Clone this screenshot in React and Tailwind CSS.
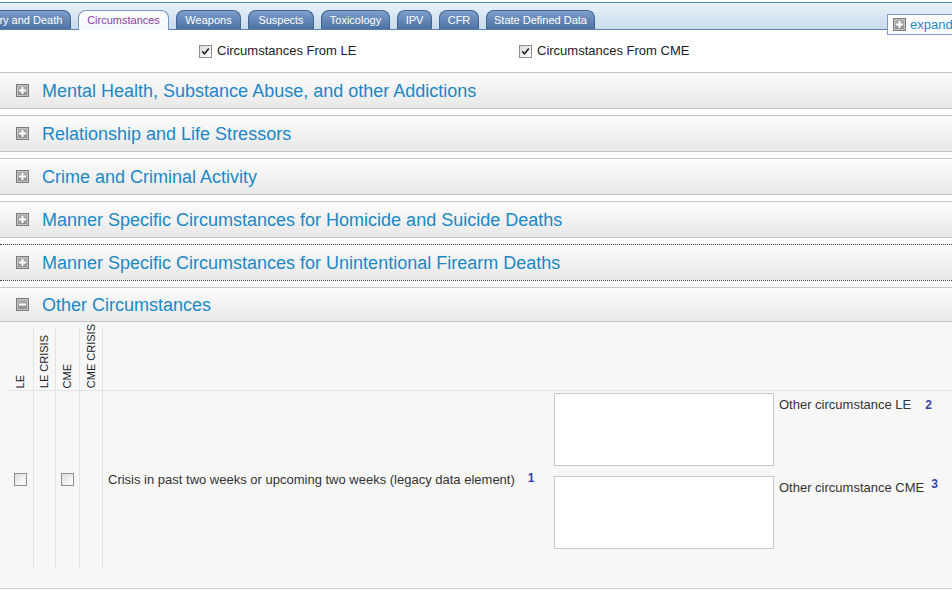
import React from "react";

const tabs = [
  { label: "Injury and Death", w: "w-[98px] ml-[-27px]" },
  { label: "Circumstances", w: "w-[91px]", active: true },
  { label: "Weapons", w: "w-[65px]" },
  { label: "Suspects", w: "w-[66px]" },
  { label: "Toxicology", w: "w-[69px]" },
  { label: "IPV", w: "w-[35px]" },
  { label: "CFR", w: "w-[40px]" },
  { label: "State Defined Data", w: "w-[109px]" },
];

const sections = [
  { title: "Mental Health, Substance Abuse, and other Addictions", cls: "mt-0 border-solid" },
  { title: "Relationship and Life Stressors", cls: "mt-[6px] border-solid" },
  { title: "Crime and Criminal Activity", cls: "mt-[6px] border-solid" },
  { title: "Manner Specific Circumstances for Homicide and Suicide Deaths", cls: "mt-[6px] border-solid" },
  { title: "Manner Specific Circumstances for Unintentional Firearm Deaths", cls: "mt-[6px] border-dotted !border-[#444]" },
];

const CheckBox = ({ checked }) => (
  <span className="inline-flex w-[13px] h-[13px] shrink-0 items-center justify-center border border-[#8f8f8f] bg-linear-to-br from-[#dedede] to-white">
    {checked && (
      <svg width="9" height="9" viewBox="0 0 9 9">
        <path d="M1.2 4.3 L3.5 6.8 L7.8 1.6" fill="none" stroke="#1f1f1f" strokeWidth="1.5" />
      </svg>
    )}
  </span>
);

const Toggle = ({ open }) => (
  <span className="inline-flex w-[13px] h-[13px] shrink-0 items-center justify-center border border-[#7a7a7a] bg-linear-to-b from-[#b0b0b0] to-[#8e8e8e] shadow-[inset_0_0_0_1px_#c4c4c4]">
    <svg width="9" height="9" viewBox="0 0 9 9">
      <path d={open ? "M1 4.5H8" : "M1 4.5H8M4.5 1V8"} stroke="#fff" strokeWidth="2" />
    </svg>
  </span>
);

const SectionHeader = ({ title, open, cls }) => (
  <div className={`flex items-center pl-[16px] border-y border-[#c6c6c6] bg-linear-to-b from-[#fcfcfc] to-[#e8e8e8] ${cls}`}>
    <Toggle open={open} />
    <span className="ml-[13px] text-[18px] leading-none text-[#1b88c6]">{title}</span>
  </div>
);

const Num = ({ n, cls }) => (
  <span className={`text-[12px] font-bold text-[#3541b0] ${cls}`}>{n}</span>
);

export default function App() {
  return (
    <div className="relative w-[952px] h-[605px] overflow-hidden bg-white font-['Liberation_Sans',Arial,sans-serif] text-[#333]">
      {/* Tab strip */}
      <div className="h-[30px] pt-[2px]">
        <div className="h-full flex items-end gap-[7px] border-y border-[#5a82ad] bg-linear-to-b from-[#e9f1f8] to-[#c8dbec]">
          {tabs.map((t) => (
            <div
              key={t.label}
              className={
                t.active
                  ? `${t.w} shrink-0 h-[20px] -mb-px flex items-center justify-center whitespace-nowrap rounded-t-[8px] border border-b-0 border-[#7397be] bg-linear-to-b from-white to-[#f3f8fc] text-[11px] text-[#8c3f99]`
                  : `${t.w} shrink-0 h-[19px] flex items-center justify-center whitespace-nowrap rounded-t-[8px] border border-b-0 border-[#3d6592] bg-linear-to-b from-[#809fca] to-[#4b71a4] text-[11px] text-white`
              }
            >
              {t.label}
            </div>
          ))}
        </div>
      </div>

      {/* Expand all */}
      <div className="absolute left-[887px] top-[14px] w-[90px] h-[21px] flex items-center pl-[5px] border border-[#7b9cc3] bg-white">
        <Toggle />
        <span className="ml-[4px] text-[13px] text-[#1b88c6]">expand</span>
      </div>

      {/* Source checkboxes */}
      <div className="h-[42px] flex items-center pl-[199px] text-[13px] text-[#222]">
        <div className="w-[320px] flex items-center">
          <CheckBox checked />
          <span className="ml-[5px]">Circumstances From LE</span>
        </div>
        <div className="flex items-center">
          <CheckBox checked />
          <span className="ml-[5px]">Circumstances From CME</span>
        </div>
      </div>

      {/* Collapsed sections */}
      {sections.map((s) => (
        <SectionHeader key={s.title} title={s.title} cls={`h-[37px] ${s.cls}`} />
      ))}
      <SectionHeader title="Other Circumstances" open cls="h-[35px] mt-[6px]" />

      {/* Other circumstances table */}
      <div className="pt-[6px] pb-[20px] bg-[#f7f7f7] border-b border-[#cfcfcf]">
        <div className="ml-[8px] flex h-[63px] border-b border-[#e3e3e3] text-[11px] text-[#222]">
          {[
            { l: "LE", w: "w-[25px]" },
            { l: "LE CRISIS", w: "w-[22px] border-l" },
            { l: "CME", w: "w-[24px] border-l" },
            { l: "CME CRISIS", w: "w-[23px] border-l" },
          ].map((c) => (
            <div key={c.l} className={`${c.w} border-[#e3e3e3] flex items-end justify-center pb-[2px]`}>
              <span className="[writing-mode:vertical-rl] rotate-180 leading-none whitespace-nowrap">{c.l}</span>
            </div>
          ))}
          <div className="flex-1 border-l border-[#e3e3e3]" />
        </div>

        <div className="ml-[8px] flex h-[177px] text-[13px]">
          <div className="w-[25px] flex items-center justify-center">
            <CheckBox />
          </div>
          <div className="w-[22px] border-l border-[#e3e3e3]" />
          <div className="w-[24px] border-l border-[#e3e3e3] flex items-center justify-center">
            <CheckBox />
          </div>
          <div className="w-[23px] border-l border-[#e3e3e3]" />
          <div className="w-[448px] border-l border-[#e3e3e3] flex items-center pl-[5px]">
            <span className="whitespace-nowrap">Crisis in past two weeks or upcoming two weeks (legacy data element)</span>
            <Num n="1" cls="ml-[13px] -mt-[3px]" />
          </div>
          <div className="flex-1 flex flex-col gap-[10px] pt-[2px] pl-[4px]">
            <div className="flex">
              <div className="w-[220px] h-[73px] shrink-0 border border-[#c8c8c8] bg-white" />
              <div className="ml-[5px] pt-[2px] flex items-start whitespace-nowrap">
                <span>Other circumstance LE</span>
                <Num n="2" cls="ml-[14px] mt-[1px]" />
              </div>
            </div>
            <div className="flex">
              <div className="w-[220px] h-[73px] shrink-0 border border-[#c8c8c8] bg-white" />
              <div className="ml-[5px] pt-[2px] flex items-start whitespace-nowrap">
                <span>Other circumstance CME</span>
                <Num n="3" cls="ml-[7px] -mt-[3px]" />
              </div>
            </div>
          </div>
        </div>
      </div>
    </div>
  );
}
